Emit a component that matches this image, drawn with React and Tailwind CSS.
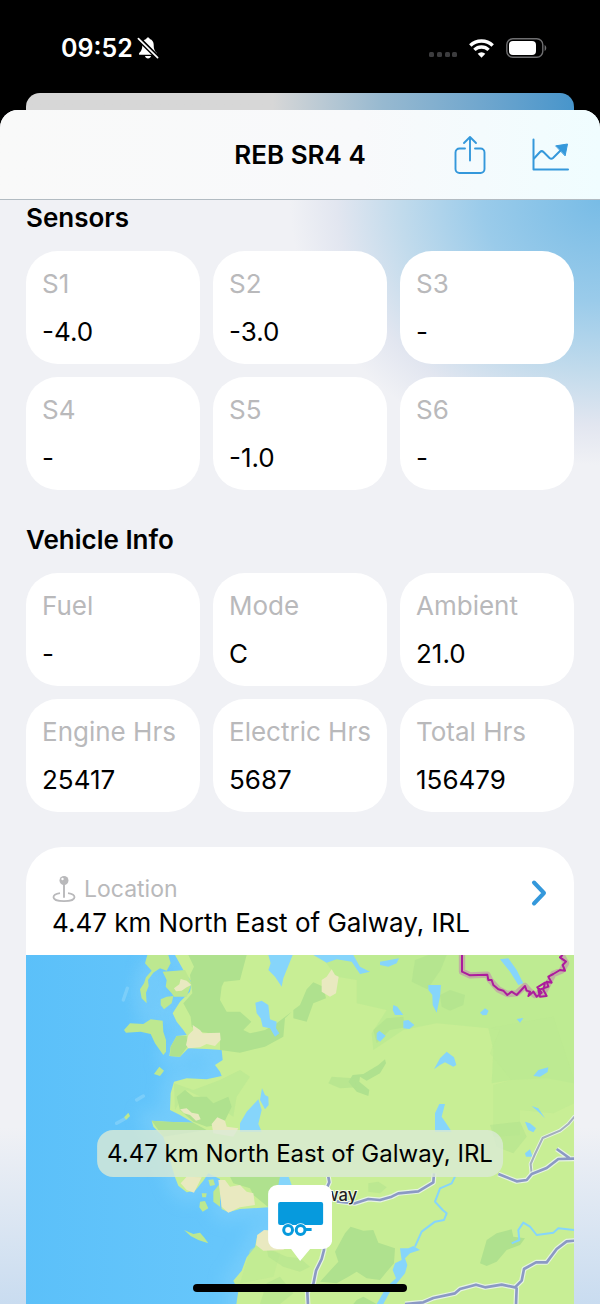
const sensors = [
  { label: 'S1', value: '-4.0' },
  { label: 'S2', value: '-3.0' },
  { label: 'S3', value: '-' },
  { label: 'S4', value: '-' },
  { label: 'S5', value: '-1.0' },
  { label: 'S6', value: '-' }
]

const vehicleInfo = [
  { label: 'Fuel', value: '-' },
  { label: 'Mode', value: 'C' },
  { label: 'Ambient', value: '21.0' },
  { label: 'Engine Hrs', value: '25417' },
  { label: 'Electric Hrs', value: '5687' },
  { label: 'Total Hrs', value: '156479' }
]

const location = '4.47 km North East of Galway, IRL'

function StatusBar() {
  return (
    <div className="flex items-center justify-between px-[53px] pt-[34px] pb-[31px] text-white">
      <div className="flex items-center gap-1 pl-2">
        <span className="text-[25px] leading-7 font-semibold">09:52</span>
        <svg width="22" height="22" viewBox="0 0 22 22" fill="currentColor" aria-hidden="true">
          <path d="M11 .6c.9 0 1.600.6 1.700 1.400 2.700.8 4 3 4 5.700 0 5 1.300 6.500 3 8.200.8.9.3 1.900-.8 1.900H3.100c-1.100 0-1.600-1-.8-1.900 1.700-1.700 3-3.200 3-8.200 0-2.700 1.300-4.900 4-5.700C9.400 1.200 10.100.6 11 .6z" />
          <path d="M8 19h6c-.3 1.500-1.500 2.400-3 2.400S8.300 20.500 8 19z" />
          <path d="M1.500 1.500 21 20.800" stroke="#000" strokeWidth="4.800" />
          <path d="M1.400 1.700 20.600 20.700" stroke="currentColor" strokeWidth="1.700" strokeLinecap="round" />
        </svg>
      </div>
      <div className="flex items-center gap-3">
        <svg width="30" height="20" viewBox="0 0 30 20" fill="#3c3c3e" aria-hidden="true">
          <rect x="2" y="14" width="5" height="5" rx="1.500" />
          <rect x="10" y="14" width="5" height="5" rx="1.500" />
          <rect x="18" y="14" width="5" height="5" rx="1.500" />
          <rect x="25" y="14" width="5" height="5" rx="1.500" />
        </svg>
        <svg width="25" height="19" viewBox="0 0 25 19" fill="none" stroke="currentColor" strokeWidth="3.400" aria-hidden="true">
          <path d="M1.300 6.500a16 16 0 0 1 22.400 0" />
          <path d="M5.400 10.900a10.200 10.200 0 0 1 14.200 0" />
          <path d="M12.500 18.700 8.700 14.800a5.500 5.500 0 0 1 7.600 0z" fill="currentColor" stroke="none" />
        </svg>
        <svg width="41" height="20" viewBox="0 0 41 20" aria-hidden="true">
          <rect x=".8" y=".8" width="36" height="18.400" rx="6" fill="none" stroke="#6e6e70" strokeWidth="1.400" />
          <rect x="3" y="3" width="27" height="14" rx="4" fill="#fff" />
          <path d="M38.600 7c2.200.8 2.200 5.200 0 6z" fill="#6e6e70" />
        </svg>
      </div>
    </div>
  )
}

function Header() {
  return (
    <header className="grid grid-cols-[1fr_auto_1fr] items-center border-b border-[#b2bbc2] bg-linear-to-r from-[#f9f9f9] via-[#f8f9fb] via-60% to-[#f0fdff] px-[30px] py-[22px]">
      <h1 className="col-start-2 text-[26px] leading-[45px] font-semibold">REB SR4 4</h1>
      <div className="flex items-center justify-end gap-11 text-[#3498db]">
        <button type="button" aria-label="Share">
          <svg width="32" height="40" viewBox="0 0 32 40" fill="none" stroke="currentColor" strokeWidth="1.900" strokeLinecap="round" strokeLinejoin="round">
            <path d="M11 13.500H5.500a4 4 0 0 0-4 4V34a4 4 0 0 0 4 4h21a4 4 0 0 0 4-4V17.500a4 4 0 0 0-4-4H21" />
            <path d="M16 25.500V2.500M10 8l6-6 6 6" />
          </svg>
        </button>
        <button type="button" aria-label="Chart">
          <svg width="40" height="34" viewBox="0 0 40 34" fill="none" stroke="currentColor" strokeWidth="2" strokeLinecap="round" strokeLinejoin="round">
            <path d="M3.500 1.500v30H38" />
            <path d="m4 20.500 6-6.500c1.200-1.200 2.300-1.200 3.500 0l6 6c1.200 1.100 2.400 1 3.500 0L32 11" />
            <path d="m26 7.800 11.500-1.800-2.300 11.500z" fill="currentColor" strokeWidth="1" />
          </svg>
        </button>
      </div>
    </header>
  )
}

function InfoCard({ label, value }) {
  return (
    <div className="rounded-[32px] bg-white px-4 pt-4 pb-[15px] text-[26px] leading-[34px]">
      <dt className="whitespace-nowrap text-[#b9b9bb]">{label}</dt>
      <dd className="mt-[14px]">{value}</dd>
    </div>
  )
}

function Section({ title, items }) {
  return (
    <section>
      <h2 className="text-[26px] leading-9 font-semibold">{title}</h2>
      <dl className="mt-[15px] grid grid-cols-3 gap-[13px]">
        {items.map((item) => (
          <InfoCard key={item.label} {...item} />
        ))}
      </dl>
    </section>
  )
}

function MapDrawing() {
  return (
    <svg viewBox="18 15 1644 1047" className="block h-auto w-full" role="img" aria-label="Map of Galway">
      <defs>
        <linearGradient id="sea" x1="0" y1="0" x2="1" y2="0">
          <stop offset="0" stopColor="#5bc0f9" />
          <stop offset=".35" stopColor="#66c6fb" />
        </linearGradient>
        <filter id="soft" x="-20%" y="-20%" width="140%" height="140%">
          <feGaussianBlur stdDeviation="22" />
        </filter>
        <path id="mainland" d="M465 15 490 60 500 75 515 95 510 125 495 140 480 155 458 190 470 215 490 240 500 255 470 258 452 290 448 318 480 320 505 295 560 297 605 300 608 330 585 345 600 365 605 378 560 388 500 385 462 395 452 430 450 480 480 495 520 518 440 515 395 512 400 530 430 560 465 682 475 707 500 727 525 722 550 692 565 670 600 687 600 722 605 777 625 787 660 777 745 772 840 765 850 840 735 842 712 855 705 892 680 922 665 962 640 992 655 1022 648 1070H1680V0H465z" />
        <path id="roads" d="M1435 672 1490 694 1520 690 1535 672 1580 654 1615 627 1665 626M1610 597 1648 624M950 754 1005 760 1045 747 1080 750 1115 740 1135 730 1195 724 1240 697 1242 670M925 680 928 697 920 715 912 900 905 927 888 962 880 1002 862 1027 864 1065M1155 1062 1210 1057 1240 1044 1305 1030 1320 1017 1368 1004 1395 1012 1445 1004 1485 1012 1505 992 1512 957 1548 937 1580 937 1610 897 1640 874 1665 872M1490 1012 1488 1065" />
        <path id="minor-road" d="M1535 672 1532 642 1545 612 1568 564 1620 542 1645 522 1665 498" />
      </defs>
      <rect x="0" y="0" width="1680" height="1080" fill="url(#sea)" />
      <use href="#mainland" fill="#8bd5fb" stroke="#82d2fc" strokeWidth="60" opacity=".5" filter="url(#soft)" />
      <ellipse cx="400" cy="130" rx="60" ry="110" fill="#86d3fb" opacity=".45" filter="url(#soft)" />
      <use href="#mainland" fill="#c8ee95" />

      {/* islands and peninsulas */}
      <g fill="#bde890">
        <path d="M382 15 375 40 395 62 378 82 372 100 360 118 365 145 380 160 378 128 386 108 384 90 400 68 420 55 440 62 452 40 445 15z" />
        <path d="M428 65 440 90 437 110 455 130 462 140 500 140 515 100 495 60 470 62z" />
        <path d="M422 148 440 140 460 138 455 160 432 178 422 165z" />
        <path d="M312 240 330 220 370 222 392 208 428 212 430 245 438 270 438 305 430 315 405 280 392 252 362 245 318 248z" />
        <path d="M402 372 418 350 432 362 420 378zM312 502 325 488 330 498 318 510z" />
        <path d="M492 840 520 852 540 848 552 862 565 880 535 870 512 858z" />
        <path d="M540 755 555 753 565 775 548 785 538 772zM565 690 580 688 585 705 570 708zM580 725 600 700 600 770 580 755zM545 730 560 730 558 742 547 742z" />
      </g>

      {/* lighter woodland */}
      <g fill="#bbe992">
        <path d="M900 15H1662V400L1580 385 1475 390 1415 400 1420 300 1405 235 1250 220 1150 240 1060 300 1055 250 1100 180 1010 160 1010 90 950 80z" opacity=".75" />
        <path d="M1405 235 1440 240 1410 310 1475 390 1420 405 1420 560 1500 555 1500 480 1600 490 1662 460V390L1600 200z" opacity=".5" />
        <path d="M462 400 520 420 600 390 660 360 690 380 650 440 640 500 580 460 500 420 465 480z" opacity=".8" />
        <path d="M690 900 720 880 780 910 760 980 660 1000z" opacity=".5" />
      </g>

      {/* woodland */}
      <g fill="#afe18e">
        <path d="M505 15 522 50 510 75 517 130 490 160 512 200 515 230 540 245 570 250 600 250 600 300 660 308 735 290 790 260 795 205 815 185 770 220 735 240 690 250 670 240 694 215 660 185 620 185 600 150 605 110 612 95 660 90 680 15z" />
        <path d="M452 290 470 258 500 258 502 290 480 320 450 318z" />
        <path d="M470 440 495 420 520 440 560 440 580 460 625 440 635 470 610 522 560 530 520 515 480 480z" />
        <path d="M395 512 440 515 520 518 560 540 430 560z" />
        <path d="M840 165 860 118 880 97 910 110 918 145 880 160 860 215 820 205 820 180z" />
        <path d="M998 375 1030 372 1075 345 1095 328 1098 340 1080 370 1040 392 1020 380 1018 395 1048 420 1045 438 1010 425 985 395z" />
        <path d="M1260 135 1290 120 1335 135 1330 165 1290 182 1265 170z" opacity=".6" />
        <path d="M1060 240 1100 205 1150 200 1155 232 1110 240 1070 280z" opacity=".6" />
        <path d="M1185 30 1225 15H1280L1262 60 1222 118 1175 95z" opacity=".6" />
        <path d="M925 400 935 380 1000 385 1010 412 960 415z" opacity=".6" />
        <path d="M1045 700 1075 695 1100 712 1080 730 1045 725z" opacity=".5" />
        <path d="M1410 525 1500 515 1520 560 1480 610 1430 590z" opacity=".5" />
        <path d="M630 680 780 680 800 770 745 772 700 735 690 715 640 700z" />
        <path d="M740 895 800 920 840 925 870 950 840 965 790 950 745 920z" opacity=".5" />
        <path d="M975 850 992 830 1030 842 1060 840 1075 878 1125 895 1122 940 1100 965 1080 990 1040 985 1010 965 985 980 950 1000 900 995 955 935 945 905z" />
        <path d="M1380 940 1400 870 1430 850 1475 838 1480 860 1515 865 1500 885 1460 900 1430 935 1400 948z" />
        <path d="M1010 1050 1030 1040 1070 1062H1000z" />
        <path d="M740 1000 780 980 820 1030 780 1062 720 1062z" opacity=".5" />
      </g>

      {/* sand and built-up ground */}
      <g fill="#e9e9c0">
        <path d="M498 285 505 255 520 240 518 225 540 240 548 250 600 248 602 270 585 288 560 282 540 292 505 295z" />
        <path d="M462 115 478 103 482 87 500 92 514 105 500 112 485 122 468 124z" />
        <path d="M480 478 500 475 515 488 535 492 542 508 528 512 510 495 492 490z" />
        <path d="M575 522 592 502 615 512 620 530 655 535 640 560 580 550z" />
        <path d="M905 90 920 80 935 58 945 75 956 80 948 130 930 140 905 125z" />
        <path d="M482 700 500 680 545 682 530 712 522 728 500 720z" />
        <path d="M595 690 615 690 630 710 660 705 680 725 700 730 705 765 660 772 625 788 605 770z" />
        <path d="M712 855 732 840 850 850 790 900 730 902 708 885z" />
      </g>

      {/* lakes and rivers */}
      <g fill="#86d5fb">
        <path d="M745 15H818L790 85 785 110 765 80 745 60 752 40z" />
        <path d="M706 158 725 152 745 165 750 208 770 215 768 235 778 250 765 260 750 235 728 230 722 205 710 190z" />
        <path d="M726 415 735 435 745 440 746 465 735 478 720 450zM715 448 725 480 715 522 725 545 660 545 660 520 680 485z" />
        <path d="M880 15H1000L1020 50 1050 65 1020 72 995 35 950 28 920 38z" />
        <path d="M1080 35 1137 25 1130 40 1105 50 1080 45zM1225 105H1263L1260 140 1250 188 1238 165 1237 135 1225 120z" />
        <path d="M1120 165 1132 170 1150 195 1125 195 1118 180zM1150 212 1165 210 1183 225 1168 237 1150 235zM1070 250 1078 242 1097 257 1080 275 1070 268z" />
        <path d="M1242 358 1260 325 1280 305 1302 322 1309 345 1300 350 1275 337 1260 345z" />
        <path d="M1440 28 1465 25 1490 60 1510 100 1495 105 1470 65z" />
        <path d="M1380 188 1395 175 1406 182 1400 195 1388 196zM1490 207 1510 204 1500 218zM1540 378 1555 360 1585 352 1583 366 1560 380z" />
        <path d="M1258 462H1275L1265 500 1280 522 1295 545H1245L1245 490zM1535 468 1555 475 1575 505 1555 485zM1515 515 1530 520 1548 535 1540 547 1525 540zM1515 610 1530 598 1538 620 1518 620z" />
        <path d="M1140 895 1165 895 1180 888 1200 900 1170 910 1155 925 1162 945 1155 970 1110 1025 1090 1062H1070L1100 1010 1128 985 1118 960 1125 940 1145 930z" />
        <path d="M780 680H806L815 705H775z" />
      </g>
      <path d="M310 150 322 115M350 450l20-12M290 520l22-12" stroke="#8dd6fa" strokeWidth="10" strokeLinecap="round" opacity=".6" />
      <g fill="none" stroke="#86d5fb" strokeWidth="6" strokeLinejoin="round">
        <path d="M1305 680 1295 700 1260 715 1245 755 1268 780 1280 790 1272 810 1245 815 1205 845 1185 890" />
        <path d="M1475 880 1498 870 1495 840 1510 818 1530 830 1550 855 1600 848 1615 835 1662 840" />
      </g>

      {/* roads */}
      <g fill="none" strokeLinejoin="round">
        <use href="#minor-road" stroke="#e6f3e4" strokeWidth="12" />
        <use href="#minor-road" stroke="#a3aebc" strokeWidth="6" />
        <use href="#roads" stroke="#e6f3e4" strokeWidth="15" />
        <use href="#roads" stroke="#8b99c4" strokeWidth="8" />
      </g>

      {/* county border */}
      <path d="M1326 15V65L1350 76 1402 74 1410 90 1435 118 1462 132 1490 130 1515 108 1530 125 1545 135 1570 130 1588 95 1600 72 1625 62 1638 40 1625 15" fill="none" stroke="#c47ab2" strokeWidth="19" opacity=".5" strokeLinejoin="round" />
      <path d="M1326 15V65L1350 76 1402 74 1405 90 1415 90 1420 105 1435 118 1450 122 1462 135 1475 125 1490 135 1515 108 1520 122 1530 125 1525 138 1540 125 1550 140 1565 128 1552 112 1575 98 1570 120 1580 138 1560 140 1555 120 1585 110 1580 95 1595 98 1585 80 1600 72 1620 60 1635 62 1628 45 1638 35 1620 22 1628 15" fill="none" stroke="#ac1c9c" strokeWidth="6" strokeLinejoin="round" />

      <text x="1012" y="752" textAnchor="end" fontSize="50" fontWeight="500" fill="#1f1f1f" stroke="#f4fbe9" strokeWidth="6" paintOrder="stroke">Galway</text>
    </svg>
  )
}

function TrailerMarker() {
  return (
    <svg width="64" height="76" viewBox="0 0 64 76" aria-hidden="true">
      <path d="M9 0h46a9 9 0 0 1 9 9v46a9 9 0 0 1-9 9H42L32 76 23 64H9a9 9 0 0 1-9-9V9a9 9 0 0 1 9-9z" fill="#fff" />
      <rect x="10" y="17" width="45" height="23" rx="2" fill="#069add" />
      <circle cx="20" cy="45" r="6.800" fill="#fff" />
      <circle cx="32.500" cy="45" r="6.800" fill="#fff" />
      <path d="M36 44.500h7.500" stroke="#069add" strokeWidth="3" />
      <circle cx="20" cy="45" r="4.400" fill="#fff" stroke="#069add" strokeWidth="3" />
      <circle cx="32.500" cy="45" r="4.400" fill="#fff" stroke="#069add" strokeWidth="3" />
    </svg>
  )
}

function LocationCard() {
  return (
    <section className="mt-[35px] overflow-hidden rounded-t-[36px] bg-white">
      <a href="#location" className="flex items-start justify-between px-[26px] pt-6 pb-4">
        <div>
          <div className="flex items-center gap-2 text-[23px] leading-9 text-[#b9b9bb]">
            <svg width="24" height="28" viewBox="0 0 24 28" fill="none" stroke="currentColor" aria-hidden="true">
              <path d="M8 18.200c-3.600.6-6.500 2-6.500 4 0 2.400 4.500 4 10.500 4s10.500-1.600 10.500-4c0-2-2.900-3.400-6.500-4" strokeWidth="1.800" />
              <path d="M12 9v13" strokeWidth="1.900" strokeLinecap="round" />
              <circle cx="12" cy="5.500" r="4.500" fill="currentColor" stroke="none" />
              <circle cx="10.500" cy="4" r="1.200" fill="#fff" stroke="none" />
            </svg>
            Location
          </div>
          <div className="text-[26px] leading-8">{location}</div>
        </div>
        <svg width="18" height="28" viewBox="0 0 18 28" fill="none" stroke="#3498db" strokeWidth="4" strokeLinecap="round" strokeLinejoin="round" className="mt-2" aria-hidden="true">
          <path d="m4 3.500 10 10.500L4 24.500" />
        </svg>
      </a>
      <div className="relative">
        <MapDrawing />
        <div className="absolute top-1/2 left-1/2 flex -translate-x-1/2 flex-col items-center gap-2">
          <span className="rounded-2xl bg-[#dbead6]/80 px-[10px] py-[6px] text-2xl leading-[35px] whitespace-nowrap">{location}</span>
          <TrailerMarker />
        </div>
      </div>
    </section>
  )
}

export default function App() {
  return (
    <div className="relative flex min-h-screen flex-col overflow-hidden bg-black font-['Inter',sans-serif] text-black">
      <StatusBar />
      <div className="mx-[26px] h-[17px] rounded-t-[14px] bg-linear-to-r from-[#d7d7d7] from-45% via-[#97b9d0] via-65% to-[#4795cb]" />
      <div className="flex-1 overflow-hidden rounded-t-[18px] bg-[#f0f1f5]">
        <Header />
        <main className="bg-[radial-gradient(310px_265px_at_100%_0,#78bce6_0%,#9acbea_38%,#c2dbec_65%,#e2e6f0_85%,transparent_100%),linear-gradient(to_bottom,transparent_84%,#c9dcf0_100%)] px-[26px]">
          <Section title="Sensors" items={sensors} />
          <div className="mt-8">
            <Section title="Vehicle Info" items={vehicleInfo} />
          </div>
          <LocationCard />
        </main>
      </div>
      <div className="absolute bottom-3 left-1/2 h-2 w-[214px] -translate-x-1/2 rounded-full bg-black" />
    </div>
  )
}
